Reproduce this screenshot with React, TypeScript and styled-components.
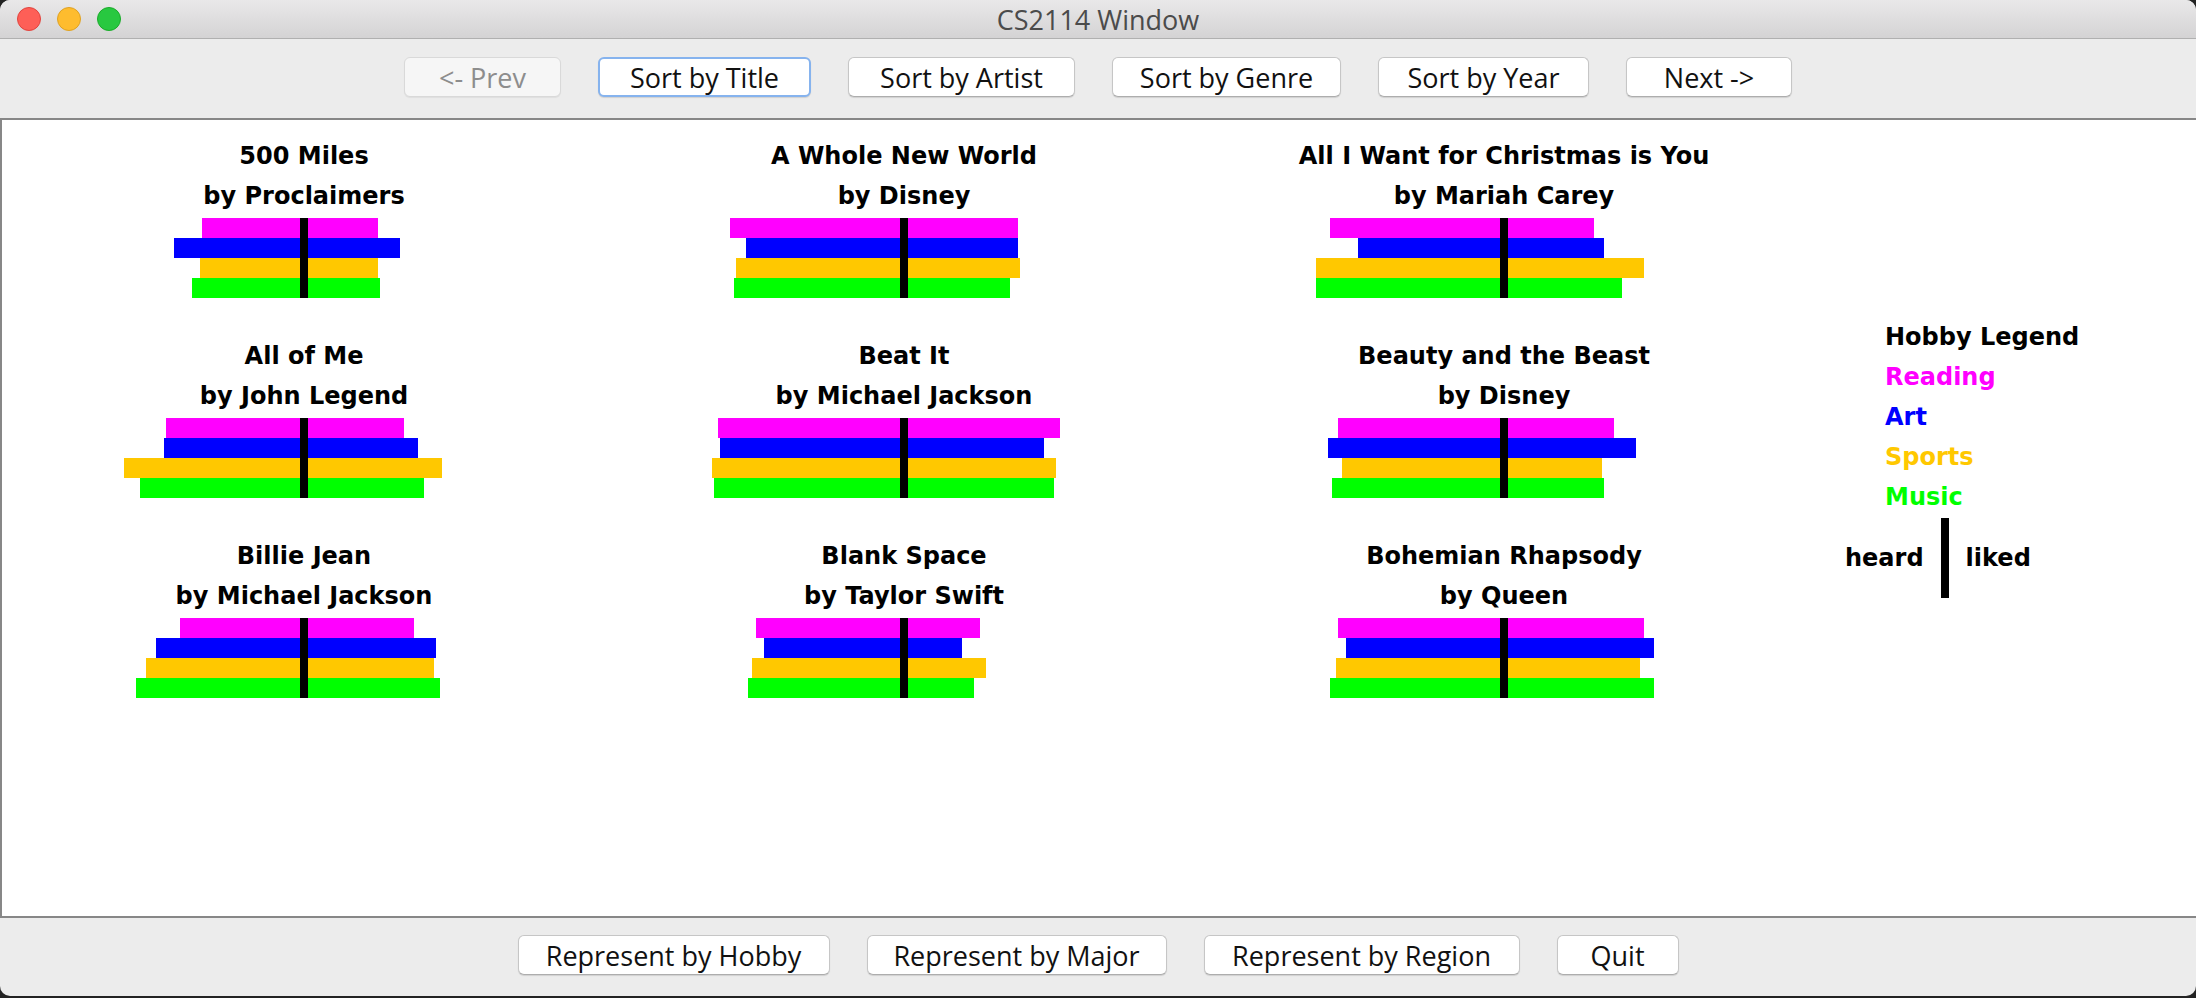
import React from "react";
import styled, { createGlobalStyle } from "styled-components";

const GlobalStyle = createGlobalStyle`
    html, body {
        margin: 0;
        padding: 0;
        background: #232323;
    }
`;

type Song = {
    title: string;
    artist: string;
    // [heard, liked] per hobby: reading, art, sports, music
    bars: [number, number][];
};

const HOBBY_COLORS = ["#ff00ff", "#0000ff", "#ffc800", "#00ff00"];
const HOBBIES = ["Reading", "Art", "Sports", "Music"];

const songs: Song[] = [
    { title: "500 Miles", artist: "Proclaimers", bars: [[98, 70], [126, 92], [100, 70], [108, 72]] },
    { title: "A Whole New World", artist: "Disney", bars: [[170, 110], [154, 110], [164, 112], [166, 102]] },
    { title: "All I Want for Christmas is You", artist: "Mariah Carey", bars: [[170, 86], [142, 96], [184, 136], [184, 114]] },
    { title: "All of Me", artist: "John Legend", bars: [[134, 96], [136, 110], [176, 134], [160, 116]] },
    { title: "Beat It", artist: "Michael Jackson", bars: [[182, 152], [180, 136], [188, 148], [186, 146]] },
    { title: "Beauty and the Beast", artist: "Disney", bars: [[162, 106], [172, 128], [158, 94], [168, 96]] },
    { title: "Billie Jean", artist: "Michael Jackson", bars: [[120, 106], [144, 128], [154, 126], [164, 132]] },
    { title: "Blank Space", artist: "Taylor Swift", bars: [[144, 72], [136, 54], [148, 78], [152, 66]] },
    { title: "Bohemian Rhapsody", artist: "Queen", bars: [[162, 136], [154, 146], [164, 132], [170, 146]] },
];

const Window = styled.div`
    width: 2196px;
    height: 996px;
    background: #ececec;
    border-radius: 10px;
    overflow: hidden;
    display: flex;
    flex-direction: column;
`;

const TitleBar = styled.div`
    height: 38px;
    flex: none;
    display: flex;
    align-items: center;
    position: relative;
    background: linear-gradient(#e9e8e9, #d4d3d4);
    border-bottom: 1px solid #b0b0b0;
`;

const Lights = styled.div`
    display: flex;
    gap: 16px;
    padding-left: 17px;
`;

const Light = styled.span<{ $color: string; $edge: string }>`
    width: 24px;
    height: 24px;
    border-radius: 50%;
    box-sizing: border-box;
    background: ${p => p.$color};
    border: 1px solid ${p => p.$edge};
`;

const WindowTitle = styled.div`
    position: absolute;
    left: 0;
    right: 0;
    text-align: center;
    font-family: "Open Sans", "Liberation Sans", sans-serif;
    font-size: 27px;
    color: #4b4b4b;
    pointer-events: none;
`;

const ButtonBar = styled.div<{ $height: number; $top: number }>`
    height: ${p => p.$height}px;
    flex: none;
    box-sizing: border-box;
    padding-top: ${p => p.$top}px;
    display: flex;
    justify-content: center;
    align-items: flex-start;
    gap: 37px;
`;

const Button = styled.button<{ $focused?: boolean; $width: number }>`
    width: ${p => p.$width}px;
    height: 40px;
    box-sizing: border-box;
    padding: 0;
    text-align: center;
    white-space: nowrap;
    font-family: "Open Sans", "Liberation Sans", sans-serif;
    font-size: 27px;
    color: #111;
    background: #fff;
    border: 1px solid #c6c6c6;
    border-bottom-color: #adadad;
    border-radius: 6px;
    box-shadow: 0 1px 1px rgba(0, 0, 0, 0.12);
    ${p => p.$focused && `
        border: 2px solid #86b3ee;
    `}

    &:disabled {
        background: #f6f6f6;
        color: #8d8d8d;
        border-color: #d9d9d9;
        box-shadow: 0 1px 1px rgba(0, 0, 0, 0.06);
    }
`;

const Canvas = styled.div`
    height: 800px;
    flex: none;
    box-sizing: border-box;
    background: #fff;
    border: 2px solid #878787;
    border-right: none;
    padding: 16px 0 0 2px;
    display: flex;
    align-items: flex-start;
    font-family: "DejaVu Sans", Verdana, sans-serif;
    font-weight: bold;
    font-size: 24px;
    line-height: 40px;
    color: #000;
`;

const GlyphGrid = styled.div`
    display: grid;
    grid-template-columns: repeat(3, 600px);
    row-gap: 38px;
`;

const Glyph = styled.div`
    display: flex;
    flex-direction: column;
    align-items: stretch;
`;

const Caption = styled.div`
    text-align: center;
    white-space: nowrap;
    height: 40px;
`;

const Stack = styled.div`
    margin-top: 2px;
    display: grid;
    grid-template-columns: 1fr 8px 1fr;
    height: 80px;
`;

const Side = styled.div<{ $align: "flex-start" | "flex-end" }>`
    display: flex;
    flex-direction: column;
    align-items: ${p => p.$align};
`;

const Segment = styled.div<{ $color: string }>`
    height: 20px;
    background: ${p => p.$color};
`;

const Divider = styled.div<{ $height: number }>`
    width: 8px;
    height: ${p => p.$height}px;
    background: #000;
`;

const Legend = styled.div`
    margin: 181px 0 0 41px;
    display: flex;
    flex-direction: column;
`;

const LegendItem = styled.div<{ $color?: string }>`
    padding-left: 40px;
    height: 40px;
    color: ${p => p.$color ?? "#000"};
`;

const HeardLiked = styled.div`
    margin-top: 1px;
    display: flex;
    align-items: center;
    gap: 17px;
`;

const GlyphView: React.FC<{ song: Song }> = ({ song }) => (
    <Glyph>
        <Caption>{song.title}</Caption>
        <Caption>by {song.artist}</Caption>
        <Stack>
            <Side $align="flex-end">
                {song.bars.map(([heard], i) => (
                    <Segment key={i} $color={HOBBY_COLORS[i]} style={{ width: heard }} />
                ))}
            </Side>
            <Divider $height={80} />
            <Side $align="flex-start">
                {song.bars.map(([, liked], i) => (
                    <Segment key={i} $color={HOBBY_COLORS[i]} style={{ width: liked }} />
                ))}
            </Side>
        </Stack>
    </Glyph>
);

const App: React.FC = () => {
    return (
        <>
            <GlobalStyle />
            <Window>
                <TitleBar>
                    <Lights>
                        <Light $color="#fe5f57" $edge="#e0443e" />
                        <Light $color="#febc2e" $edge="#dea123" />
                        <Light $color="#28c840" $edge="#1aab29" />
                    </Lights>
                    <WindowTitle>CS2114 Window</WindowTitle>
                </TitleBar>
                <ButtonBar $height={79} $top={18}>
                    <Button $width={157} disabled>&lt;- Prev</Button>
                    <Button $width={213} $focused>Sort by Title</Button>
                    <Button $width={227}>Sort by Artist</Button>
                    <Button $width={229}>Sort by Genre</Button>
                    <Button $width={211}>Sort by Year</Button>
                    <Button $width={166}>Next -&gt;</Button>
                </ButtonBar>
                <Canvas>
                    <GlyphGrid>
                        {songs.map(song => <GlyphView key={song.title} song={song} />)}
                    </GlyphGrid>
                    <Legend>
                        <LegendItem>Hobby Legend</LegendItem>
                        {HOBBIES.map((h, i) => (
                            <LegendItem key={h} $color={HOBBY_COLORS[i]}>{h}</LegendItem>
                        ))}
                        <HeardLiked>
                            <span>heard</span>
                            <Divider $height={80} />
                            <span>liked</span>
                        </HeardLiked>
                    </Legend>
                </Canvas>
                <ButtonBar $height={78} $top={17}>
                    <Button $width={312}>Represent by Hobby</Button>
                    <Button $width={300}>Represent by Major</Button>
                    <Button $width={316}>Represent by Region</Button>
                    <Button $width={122}>Quit</Button>
                </ButtonBar>
            </Window>
        </>
    );
};

export default App;
